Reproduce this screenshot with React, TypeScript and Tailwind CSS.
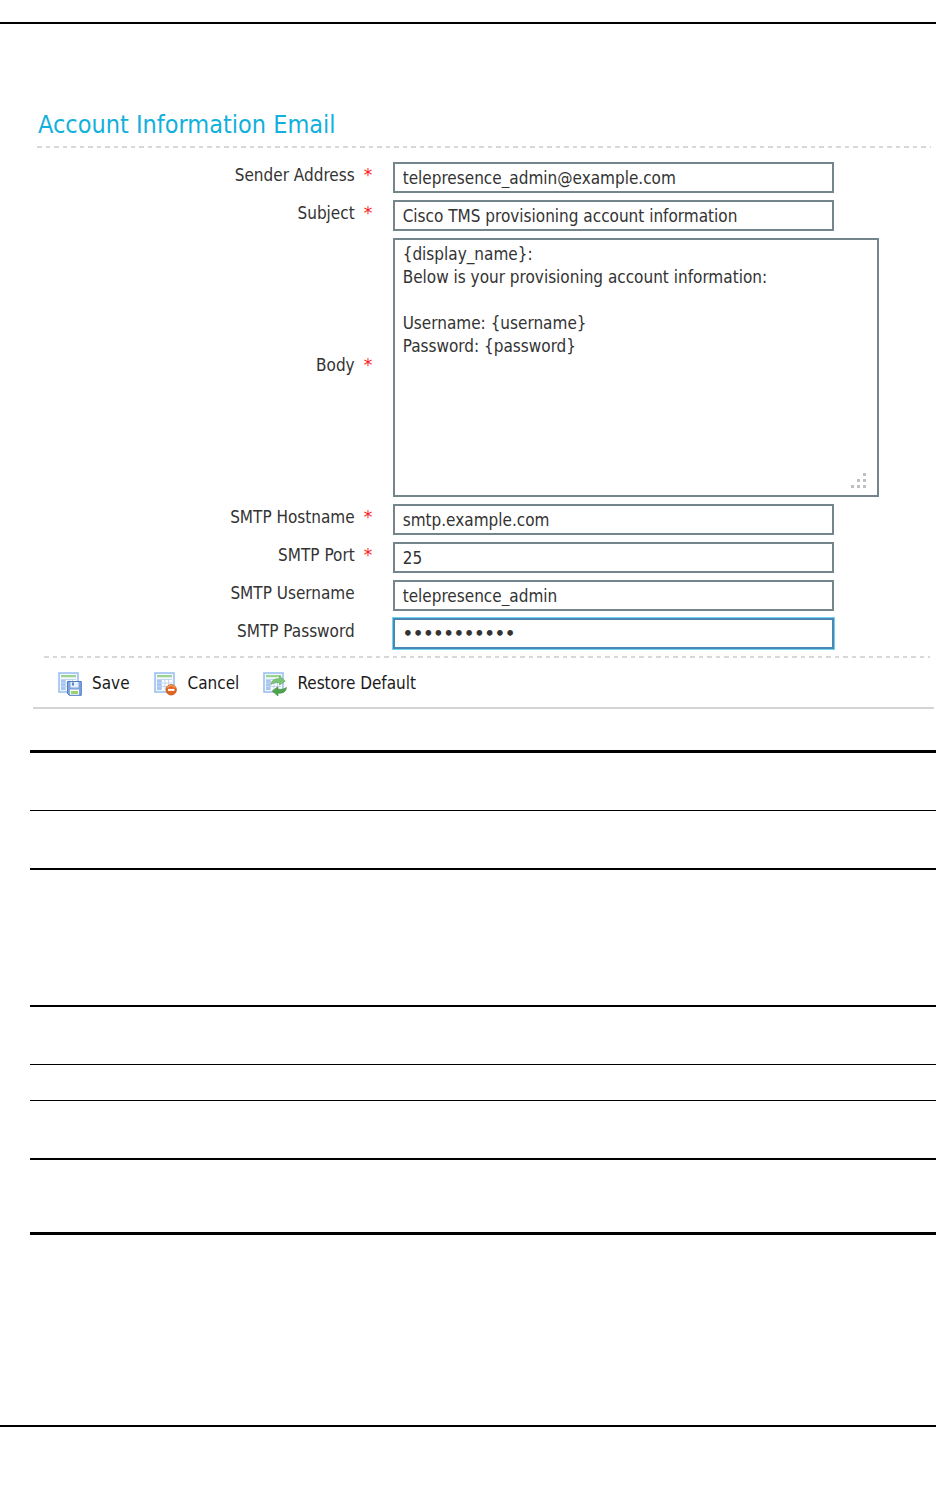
import { useState } from 'react'
import type { ReactNode } from 'react'
import clsx from 'clsx'

// ── Data ───────────────────────────────────────────────────────────────────

type Field = {
  id: string
  label: string
  required: boolean
  type: 'text' | 'password' | 'textarea'
}

const FIELDS: Field[] = [
  { id: 'sender', label: 'Sender Address', required: true, type: 'text' },
  { id: 'subject', label: 'Subject', required: true, type: 'text' },
  { id: 'body', label: 'Body', required: true, type: 'textarea' },
  { id: 'host', label: 'SMTP Hostname', required: true, type: 'text' },
  { id: 'port', label: 'SMTP Port', required: true, type: 'text' },
  { id: 'username', label: 'SMTP Username', required: false, type: 'text' },
  { id: 'password', label: 'SMTP Password', required: false, type: 'password' },
]

const DEFAULTS: Record<string, string> = {
  sender: 'telepresence_admin@example.com',
  subject: 'Cisco TMS provisioning account information',
  body: '{display_name}:\nBelow is your provisioning account information:\n\nUsername: {username}\nPassword: {password}',
  host: 'smtp.example.com',
  port: '25',
  username: 'telepresence_admin',
  password: 'provision25',
}

// ── Icons ──────────────────────────────────────────────────────────────────

function SheetIcon({ children }: { children: ReactNode }) {
  return (
    <svg viewBox="0 0 24 24" className="size-6 shrink-0" aria-hidden="true">
      <rect x="1" y="1" width="19" height="19" fill="#f2f7fe" stroke="#9dc0ef" strokeWidth="1.6" />
      <rect x="3" y="3" width="15" height="2.2" fill="#9ad48f" />
      <rect x="3" y="7" width="15" height="11" fill="#fff" />
      <rect x="3" y="7" width="4" height="11" fill="#a8c5f0" />
      <path d="M3 7.5h15M3 11h15M3 14.5h15M7.500 7v11M11 7v11M14.500 7v11" stroke="#c1d4f1" strokeWidth="1" />
      {children}
    </svg>
  )
}

function SaveIcon() {
  return (
    <SheetIcon>
      <path d="M9.5 9.5h13.8v13.8H11.3l-1.8-1.8z" fill="#7ea4de" stroke="#4f7bc4" strokeWidth="1" />
      <rect x="12.5" y="10" width="8" height="5.5" fill="#e6effc" />
      <rect x="14" y="10.500" width="2" height="3" fill="#5c86cc" />
      <rect x="12" y="17.500" width="9" height="5.300" fill="#f4faf0" />
      <rect x="13" y="19" width="7" height="3" fill="#9bd276" />
    </SheetIcon>
  )
}

function CancelIcon() {
  return (
    <SheetIcon>
      <circle cx="17.2" cy="17.8" r="5.2" fill="#e2641f" stroke="#c25213" strokeWidth="0.8" />
      <path d="M13.3 15.8a4.4 4.4 0 0 1 7.8 0" fill="none" stroke="#f39a58" strokeWidth="1.4" />
      <rect x="14" y="16.9" width="6.4" height="2" fill="#fff" />
    </SheetIcon>
  )
}

function RestoreIcon() {
  return (
    <SheetIcon>
      <path
        d="M8 12.500C8.500 8 12 6.500 16.500 6.800V4l5.800 5-5.800 4.200v-2.600c-3.300-.4-6 .2-8.500 1.900z"
        fill="#7cc475"
        stroke="#5aab56"
        strokeWidth="0.6"
      />
      <path
        d="M23.500 15.500c-.5 4.500-4 6-8.500 5.700V24l-5.800-5 5.800-4.200v2.400c3.300.3 6 0 8.500-1.700z"
        fill="#4fa34b"
        stroke="#3b893f"
        strokeWidth="0.6"
      />
    </SheetIcon>
  )
}

const ACTIONS = [
  { label: 'Save', icon: <SaveIcon /> },
  { label: 'Cancel', icon: <CancelIcon /> },
  { label: 'Restore Default', icon: <RestoreIcon /> },
]

// ── Form ───────────────────────────────────────────────────────────────────

function DashedLine({ className }: { className?: string }) {
  return (
    <div
      className={clsx(
        'h-[2px] bg-[repeating-linear-gradient(90deg,#d8d8d8_0_5px,transparent_5px_9px,#d8d8d8_9px_13px,transparent_13px_17px)]',
        className,
      )}
    />
  )
}

type FieldRowProps = {
  field: Field
  value: string
  onChange: (value: string) => void
}

function FieldRow({ field, value, onChange }: FieldRowProps) {
  const { id, label, required, type } = field

  return (
    <div className="grid grid-cols-[38%_37px_1fr] items-center">
      <label htmlFor={id} className="pr-px pb-[5px] text-right leading-6">
        {label}
      </label>
      <span className="pb-[5px] pl-2 font-['DejaVu_Sans',sans-serif] leading-6 text-[#ff2020]">
        {required && '*'}
      </span>
      {type === 'textarea' ? (
        <div className="relative w-[486px] max-w-full">
          <textarea
            id={id}
            value={value}
            onChange={(e) => onChange(e.target.value)}
            className="block h-[259px] w-full resize-none border-2 border-[#75858c] bg-white px-2 py-[3px] leading-[23px] outline-none"
          />
          <svg viewBox="0 0 16 16" className="pointer-events-none absolute right-3 bottom-2 size-4" aria-hidden="true">
            <path
              d="M12 0h3v3h-3zM6 6h3v3H6zM12 6h3v3h-3zM0 12h3v3H0zM6 12h3v3H6zM12 12h3v3h-3z"
              fill="#c0c0c0"
            />
          </svg>
        </div>
      ) : (
        <input
          id={id}
          type={type}
          value={value}
          onChange={(e) => onChange(e.target.value)}
          className={clsx(
            'h-[31px] w-[441px] max-w-full border-2 bg-white px-2 outline-none',
            type === 'password'
              ? "border-[#4a87b5] font-['DejaVu_Sans',sans-serif] text-[16px] font-bold ring-1 ring-[#6fd3f2]"
              : 'border-[#75858c]',
          )}
        />
      )}
    </div>
  )
}

function AccountEmailForm() {
  const [values, setValues] = useState(DEFAULTS)

  return (
    <form onSubmit={(e) => e.preventDefault()}>
      <h1 className="pl-[38px] text-[25px] leading-8 text-[#12b0dc]">Account Information Email</h1>
      <DashedLine className="mt-[5px] mr-[5px] ml-[37px]" />
      <div className="mt-[14px] flex flex-col gap-[7px]">
        {FIELDS.map((field) => (
          <FieldRow
            key={field.id}
            field={field}
            value={values[field.id]}
            onChange={(value) => setValues((prev) => ({ ...prev, [field.id]: value }))}
          />
        ))}
      </div>
      <DashedLine className="mt-[7px] mr-[6px] ml-[44px]" />
      <div className="mr-[2px] ml-[33px] flex h-[51px] items-center gap-6 border-b-2 border-[#d4d4d4] pt-[3px] pl-[25px]">
        {ACTIONS.map(({ label, icon }) => (
          <button key={label} type="button" className="flex items-center gap-[10px] text-[#1a1a1a]">
            {icon}
            {label}
          </button>
        ))}
      </div>
    </form>
  )
}

// ── Ruled rows under the form ──────────────────────────────────────────────

const RULED_ROWS = [
  'h-[58px] border-b',
  'h-[59px] border-b-2',
  'h-[137px] border-b-2',
  'h-[58px] border-b',
  'h-[36px] border-b',
  'h-[59px] border-b-2',
  'h-[75px] border-b-3',
]

export default function App() {
  return (
    <div className="bg-white pr-px pb-[84px] font-['DejaVu_Sans_Condensed','Noto_Sans',sans-serif] text-[17px] text-[#333333]">
      <hr className="mt-[22px] border-t-2 border-black" />
      <main className="pt-[85px]">
        <AccountEmailForm />
        <div className="mt-[41px] ml-[30px] border-t-3 border-black">
          {RULED_ROWS.map((row, i) => (
            <div key={i} className={clsx(row, 'border-black')} />
          ))}
        </div>
      </main>
      <hr className="mt-[190px] border-t-2 border-black" />
    </div>
  )
}
